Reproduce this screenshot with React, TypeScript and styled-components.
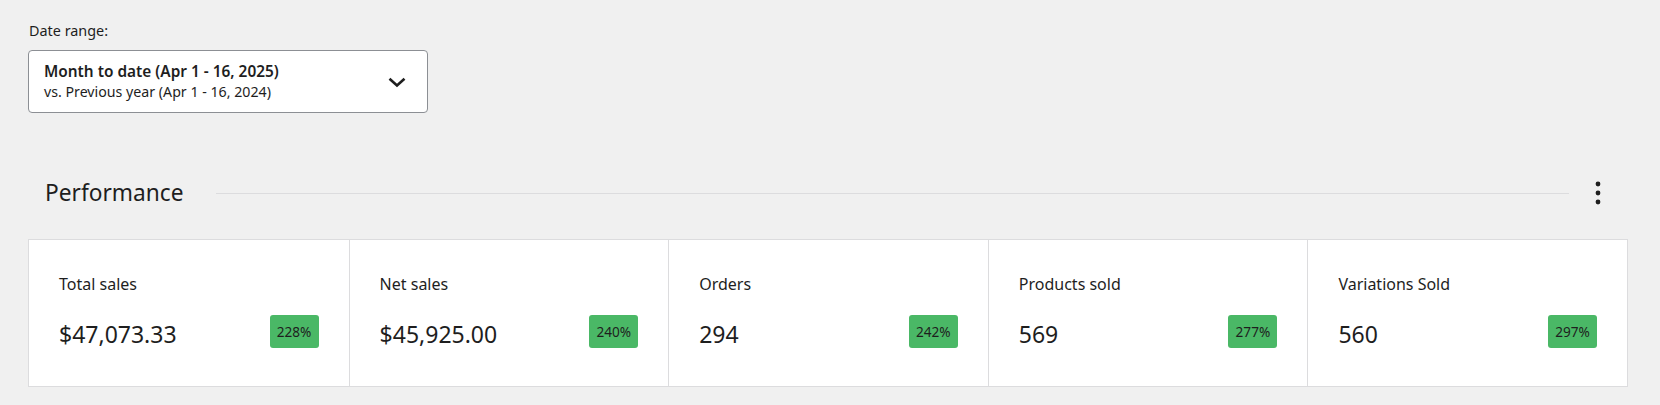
import React from "react";
import styled, { createGlobalStyle } from "styled-components";

const Global = createGlobalStyle`
  html, body { margin: 0; padding: 0; background: #f0f0f0; }
  body { font-family: "Noto Sans", "Open Sans", sans-serif; color: #1e1e1e; }
`;

const Page = styled.div`
  padding: 21px 32px 0 28px;
  width: 1600px;
`;

const FieldLabel = styled.div`
  font-size: 14.4px;
  line-height: 20px;
  color: #1e1e1e;
  padding-left: 1px;
  margin-bottom: 9px;
`;

const Select = styled.button`
  box-sizing: border-box;
  width: 400px;
  height: 63px;
  background: #fff;
  border: 1px solid #8c8f94;
  border-radius: 4px;
  display: flex;
  align-items: center;
  justify-content: space-between;
  padding: 0 18px 0 15px;
  font-family: inherit;
  color: #1e1e1e;
  text-align: left;
  cursor: pointer;
`;

const SelectText = styled.div`
  display: flex;
  flex-direction: column;
`;

const Primary = styled.span`
  font-size: 15.4px;
  font-weight: 600;
  line-height: 20px;
`;

const Secondary = styled.span`
  font-size: 14.2px;
  line-height: 20px;
`;

const Header = styled.div`
  display: flex;
  align-items: center;
  height: 46px;
  margin-top: 57px;
  padding-left: 17px;
`;

const Title = styled.h2`
  margin: 0;
  font-size: 22.7px;
  font-weight: 400;
  line-height: 30px;
  color: #1e1e1e;
`;

const Rule = styled.div`
  flex: 1;
  height: 1px;
  background: #dcdcde;
  margin: 0 17px 0 33px;
`;

const MoreButton = styled.button`
  width: 24px;
  height: 36px;
  border: 0;
  background: transparent;
  padding: 0;
  margin-right: 18px;
  display: flex;
  align-items: center;
  justify-content: center;
  color: #1e1e1e;
`;

const Cards = styled.div`
  display: grid;
  grid-template-columns: repeat(5, 1fr);
  margin-top: 23px;
  background: #fff;
  border: 1px solid #dcdcde;
  box-sizing: border-box;
  width: 1600px;
`;

const Card = styled.div<{ $first?: boolean }>`
  box-sizing: border-box;
  height: 146px;
  padding: 32px 30px 0 30px;
  border-left: ${(p) => (p.$first ? "0" : "1px solid #dcdcde")};
`;

const CardLabel = styled.div`
  font-size: 16px;
  line-height: 24px;
  color: #1e1e1e;
`;

const CardRow = styled.div`
  display: flex;
  align-items: center;
  justify-content: space-between;
  margin-top: 17px;
`;

const Value = styled.div`
  font-size: 23px;
  line-height: 36px;
  padding-top: 3px;
  margin-bottom: -3px;
  color: #1e1e1e;
`;

const Delta = styled.span`
  box-sizing: border-box;
  height: 33px;
  min-width: 49px;
  padding: 0 5px;
  border-radius: 3px;
  background: #4ab866;
  color: #1e1e1e;
  font-size: 13.6px;
  display: inline-flex;
  align-items: center;
  justify-content: center;
`;

const items = [
  { label: "Total sales", value: "$47,073.33", delta: "228%" },
  { label: "Net sales", value: "$45,925.00", delta: "240%" },
  { label: "Orders", value: "294", delta: "242%" },
  { label: "Products sold", value: "569", delta: "277%" },
  { label: "Variations Sold", value: "560", delta: "297%" },
];

export default function App() {
  return (
    <>
      <Global />
      <Page>
        <FieldLabel>Date range:</FieldLabel>
        <Select>
          <SelectText>
            <Primary>Month to date (Apr 1 - 16, 2025)</Primary>
            <Secondary>vs. Previous year (Apr 1 - 16, 2024)</Secondary>
          </SelectText>
          <svg width="24" height="24" viewBox="0 0 24 24" aria-hidden>
            <path d="M4.5 8.8L12 15.5l7.5-6.7" fill="none" stroke="#1e1e1e" strokeWidth="2.6" />
          </svg>
        </Select>
        <Header>
          <Title>Performance</Title>
          <Rule />
          <MoreButton aria-label="More">
            <svg width="24" height="24" viewBox="0 0 24 24" aria-hidden>
              <circle cx="12" cy="3" r="2.4" fill="#1e1e1e" />
              <circle cx="12" cy="12" r="2.4" fill="#1e1e1e" />
              <circle cx="12" cy="21" r="2.4" fill="#1e1e1e" />
            </svg>
          </MoreButton>
        </Header>
        <Cards>
          {items.map((it, i) => (
            <Card key={it.label} $first={i === 0}>
              <CardLabel>{it.label}</CardLabel>
              <CardRow>
                <Value>{it.value}</Value>
                <Delta>{it.delta}</Delta>
              </CardRow>
            </Card>
          ))}
        </Cards>
      </Page>
    </>
  );
}
